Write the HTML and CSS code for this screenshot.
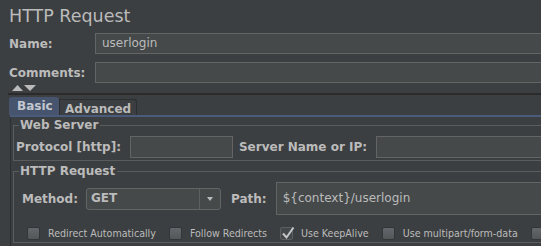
FILE: index.html
```html
<!DOCTYPE html>
<html>
<head>
<meta charset="utf-8">
<link rel="stylesheet" href="styles.css">
</head>
<body>
<div class="page">
  <h1 class="title">HTTP Request</h1>
  <div class="form-row">
    <label class="lbl">Name:</label>
    <div class="field">userlogin</div>
  </div>
  <div class="form-row comments">
    <label class="lbl">Comments:</label>
    <div class="field"></div>
  </div>
  <div class="splitter">
    <svg width="24" height="6" viewBox="0 0 24 6"><polygon points="0,6 5.5,0 11,6" fill="#bbbbbb"/><polygon points="12,0 24,0 18,6" fill="#bbbbbb"/></svg>
  </div>
  <div class="sep"></div>
  <div class="tabs">
    <div class="tab active">Basic</div>
    <div class="tab">Advanced</div>
  </div>
  <div class="tabline"></div>
  <div class="panel">
    <fieldset class="group web">
      <legend>Web Server</legend>
      <div class="group-row">
        <span class="glbl">Protocol [http]:</span>
        <div class="input proto"></div>
        <span class="glbl server">Server Name or IP:</span>
        <div class="input grow"></div>
      </div>
    </fieldset>
    <fieldset class="group http">
      <legend>HTTP Request</legend>
      <div class="method-row">
        <span class="glbl">Method:</span>
        <div class="combo">
          <span class="combo-val">GET</span>
          <span class="combo-btn"><svg width="6" height="4" viewBox="0 0 6 4"><polygon points="0,0 6,0 3,4" fill="#bbbbbb"/></svg></span>
        </div>
        <span class="glbl path-lbl">Path:</span>
        <div class="input path">${context}/userlogin</div>
      </div>
      <div class="checks">
        <div class="check"><span class="box"></span><span class="ctext">Redirect Automatically</span></div>
        <div class="check"><span class="box"></span><span class="ctext">Follow Redirects</span></div>
        <div class="check"><span class="box checked"><svg width="15" height="15" viewBox="0 0 15 15"><polyline points="2,7.5 5.5,11.5 12.5,1.5" fill="none" stroke="#c8c8c8" stroke-width="2"/></svg></span><span class="ctext">Use KeepAlive</span></div>
        <div class="check"><span class="box"></span><span class="ctext">Use multipart/form-data</span></div>
        <div class="check"><span class="box"></span></div>
      </div>
    </fieldset>
  </div>
</div>
</body>
</html>
```
FILE: styles.css
```css
html, body {
  margin: 0;
  padding: 0;
  background: #3c3f41;
  overflow: hidden;
}
body {
  font-family: "DejaVu Sans", sans-serif;
  color: #bbbbbb;
}
.page {
  width: 640px;
}
.title {
  margin: 6px 0 0 9px;
  height: 20px;
  font-size: 17.5px;
  font-weight: normal;
  line-height: 20px;
}
.form-row {
  display: flex;
  align-items: center;
  height: 21px;
  margin-top: 7px;
}
.form-row.comments {
  margin-top: 8px;
}
.lbl {
  flex: 0 0 95px;
  box-sizing: border-box;
  padding-left: 9px;
  font-size: 12px;
  font-weight: bold;
  line-height: 14px;
}
.field {
  flex: 1;
  height: 21px;
  box-sizing: border-box;
  border: 1px solid #646464;
  background: #45494a;
  padding-left: 6px;
  font-size: 12px;
  line-height: 19px;
}
.splitter {
  margin: 2px 0 0 12px;
  height: 6px;
  line-height: 0;
}
.sep {
  margin: 2px 0 0 8px;
  height: 2px;
  background: #2b2b2b;
}
.tabs {
  display: flex;
  align-items: flex-end;
  margin: 2px 0 0 9px;
  height: 18px;
}
.tab {
  box-sizing: border-box;
  font-size: 12px;
  font-weight: bold;
  line-height: 14px;
}
.tab.active {
  width: 50px;
  height: 18px;
  padding: 2px 0 0 8px;
  background: #46546e;
  border-radius: 3px 3px 0 0;
  color: #c4c8cf;
}
.tab:not(.active) {
  width: 78px;
  height: 16px;
  padding: 2px 0 0 5px;
  border: 1px solid #2c2e30;
  border-bottom: none;
  border-radius: 0 3px 0 0;
}
.tabline {
  margin-left: 10px;
  height: 2px;
  background: #4a5b7b;
}
.panel {
  margin-left: 10px;
  border-left: 1px solid #2d2f31;
  padding: 1px 0 0 2px;
  height: 200px;
}
.group {
  margin: 0;
  padding: 0 0 2px 2px;
  border: 1px solid #5a5c5e;
  min-width: 0;
}
.group legend {
  margin-left: 3px;
  padding: 0 2px 0 1px;
  font-size: 12px;
  font-weight: bold;
  line-height: 14px;
}
.group.http {
  margin-top: 3px;
}
.group-row {
  display: flex;
  align-items: center;
  height: 22px;
  margin-top: 4px;
}
.glbl {
  font-size: 12px;
  font-weight: bold;
  line-height: 14px;
  white-space: nowrap;
}
.input {
  height: 22px;
  box-sizing: border-box;
  border: 1px solid #646464;
  background: #45494a;
  font-size: 12px;
}
.input.proto {
  width: 103px;
  margin-left: 9px;
}
.glbl.server {
  margin-left: 6px;
}
.input.grow {
  flex: 1;
  margin-left: 9px;
}
.method-row {
  display: flex;
  align-items: center;
  height: 33px;
  margin-top: 4px;
  padding-left: 6px;
}
.combo {
  display: flex;
  width: 135px;
  height: 22px;
  margin-left: 8px;
  box-sizing: border-box;
  border: 1px solid #646464;
  border-radius: 3px;
  background: #45494a;
}
.combo-val {
  flex: 1;
  padding-left: 4px;
  font-size: 12px;
  font-weight: bold;
  line-height: 19px;
}
.combo-btn {
  width: 20px;
  border-left: 1px solid #5e6062;
  display: flex;
  align-items: center;
  justify-content: center;
  padding-top: 1px;
}
.glbl.path-lbl {
  margin-left: 10px;
}
.input.path {
  flex: 1;
  height: 33px;
  margin-left: 9px;
  padding-left: 6px;
  line-height: 31px;
}
.checks {
  display: flex;
  align-items: center;
  gap: 13px;
  height: 13px;
  margin-top: 12px;
  padding-left: 11px;
}
.check {
  display: flex;
  align-items: center;
  gap: 8px;
  white-space: nowrap;
}
.box {
  position: relative;
  width: 13px;
  height: 13px;
  box-sizing: border-box;
  border: 1px solid #333537;
  border-radius: 2px;
  background: linear-gradient(#63666a, #54575a);
}
.box.checked {
  background: #45484a;
  border-color: #5c5f62;
}
.box svg {
  position: absolute;
  left: 0;
  top: -2px;
}
.ctext {
  font-family: "DejaVu Sans Condensed", "DejaVu Sans", sans-serif;
  font-stretch: condensed;
  font-size: 10.6px;
  line-height: 13px;
}
```
